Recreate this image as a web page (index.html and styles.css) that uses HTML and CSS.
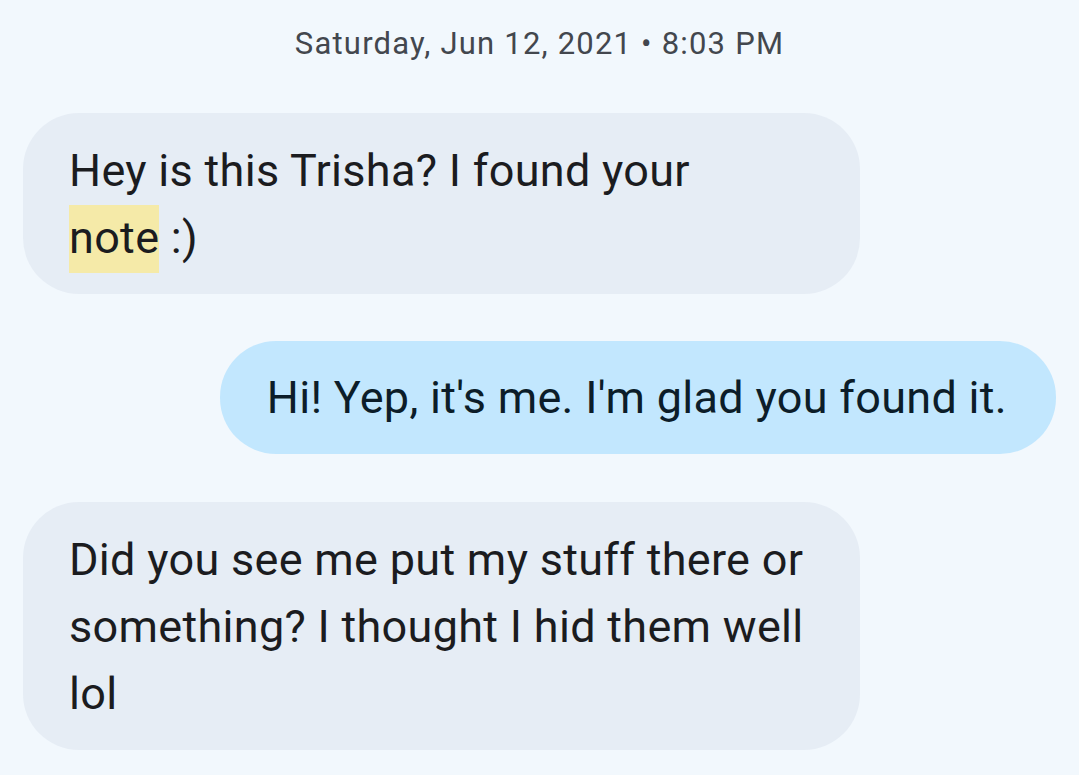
FILE: index.html
```html
<!DOCTYPE html>
<html>
<head lang="en">
  <meta charset="UTF-8">
  <title>Messages</title>
  <link rel="stylesheet" href="styles.css">
</head>
<body>
<div class="thread">
  <div class="stamp">Saturday, Jun 12, 2021 • 8:03 PM</div>
  <div class="row">
    <div class="bubble in">Hey is this Trisha? I found your<br><span class="mark">note</span> :)</div>
  </div>
  <div class="row out-row">
    <div class="bubble out">Hi! Yep, it's me. I'm glad you found it.</div>
  </div>
  <div class="row">
    <div class="bubble in">Did you see me put my stuff there or something? I thought I hid them well lol</div>
  </div>
</div>
</body>
</html>
```

FILE: styles.css
```css
* {
  margin: 0;
  padding: 0;
}

html,
body {
  height: 100%;
}

body {
  background-color: #f2f8fd;
  font-family: Roboto, "Noto Sans", sans-serif;
  overflow: hidden;
}

.thread {
  display: flex;
  flex-direction: column;
  gap: 47px;
  padding: 24px 23px 0;
}

.stamp {
  text-align: center;
  font-size: 31px;
  line-height: 40px;
  letter-spacing: 1.2px;
  color: #43474e;
  margin-bottom: 2px;
}

.row {
  display: flex;
}

.out-row {
  justify-content: flex-end;
  margin-bottom: 1px;
}

.bubble {
  padding: 24px 46px 23px;
  border-radius: 56px;
  font-size: 45px;
  line-height: 67px;
  letter-spacing: 0.3px;
}

.bubble.in {
  width: 745px;
  background-color: #e6edf5;
  color: #1b1c1f;
}

.bubble.out {
  padding: 23px 49px 23px 47px;
  background-color: #c2e7fe;
  color: #0c1d29;
}

.mark {
  background-color: #f5eaa8;
  padding: 6px 0 9px;
}
```
